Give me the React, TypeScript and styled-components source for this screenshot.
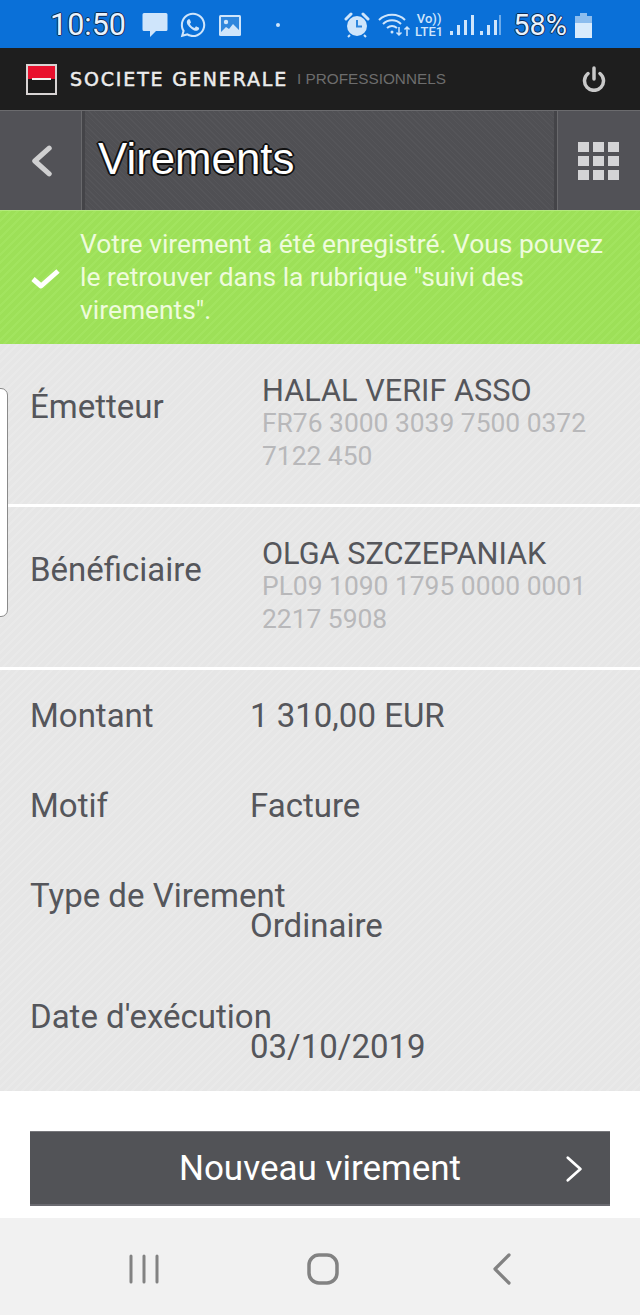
import React from "react";
import styled, { createGlobalStyle } from "styled-components";
import { FaWhatsapp } from "react-icons/fa";

const GlobalStyle = createGlobalStyle`
  html, body {
    margin: 0;
    padding: 0;
    background: #ffffff;
  }
  * {
    box-sizing: border-box;
  }
`;

const Page = styled.div`
  position: relative;
  width: 640px;
  height: 1315px;
  overflow: hidden;
  display: flex;
  flex-direction: column;
  font-family: Roboto, "Liberation Sans", sans-serif;
`;

/* barre de statut */
const StatusBar = styled.div`
  height: 48px;
  flex: none;
  background: #0a70d8;
  display: flex;
  align-items: center;
  justify-content: space-between;
  padding: 2px 48px 0 50px;
  color: #cfe5fb;
`;

const StatusGroup = styled.div`
  display: flex;
  align-items: center;
  gap: ${(p: { $gap?: number }) => p.$gap ?? 10}px;
`;

const OutlinedStatusText = styled.span<{ $size: number; $ml?: number; $mr?: number }>`
  font-size: ${(p) => p.$size}px;
  line-height: 1;
  color: #e8f2fc;
  margin-left: ${(p) => p.$ml ?? 0}px;
  margin-right: ${(p) => p.$mr ?? 0}px;
  text-shadow: -1px 0 #0b2a55, 1px 0 #0b2a55, 0 -1px #0b2a55, 0 1px #0b2a55;
`;

const Dot = styled.span`
  width: 4px;
  height: 4px;
  border-radius: 50%;
  background: #cfe5fb;
  margin: 0 60px 0 23px;
`;

const NetLabel = styled.span`
  display: flex;
  flex-direction: column;
  align-items: center;
  width: 30px;
  font-size: 13px;
  line-height: 13px;
  font-weight: 500;
  color: #cfe5fb;
  margin: 0 1px 0 -3px;
`;

/* bandeau banque */
const BrandBar = styled.div`
  height: 62px;
  flex: none;
  background: #1e1e1e;
  display: flex;
  align-items: center;
  padding: 0 34px 0 26px;
`;

const Logo = styled.div`
  width: 31px;
  height: 31px;
  border: 2px solid #d8d4d4;
  background: linear-gradient(#e9112e 0 50%, #1a1a1a 50% 100%);
  display: flex;
  align-items: center;
  justify-content: center;
  margin-right: 13px;
  &::after {
    content: "";
    width: 19px;
    height: 2px;
    background: #f2f2f2;
  }
`;

const BrandName = styled.span`
  font-family: "DejaVu Sans", sans-serif;
  font-size: 19px;
  font-weight: 400;
  color: #ececec;
  letter-spacing: 1.85px;
  -webkit-text-stroke: 0.5px #ececec;
`;

const BrandSub = styled.span`
  font-family: "Liberation Sans", sans-serif;
  font-size: 15.3px;
  color: #6d6d6d;
  margin-left: 9px;
  flex: 1;
`;

/* barre de titre */
const TitleBar = styled.div`
  height: 100px;
  flex: none;
  display: grid;
  grid-template-columns: 85px 1fr 86px;
  background: #525257;
  border-top: 1px solid #6b6b6e;
`;

const TitleCell = styled.div<{ $divider?: "left" | "right" }>`
  display: flex;
  align-items: center;
  justify-content: center;
  ${(p) =>
    p.$divider === "right"
      ? "border-right: 3px solid #444448; box-shadow: inset -1px 0 #69696c;"
      : ""}
  ${(p) =>
    p.$divider === "left"
      ? "border-left: 3px solid #444448; box-shadow: inset 1px 0 #69696c;"
      : ""}
`;

const TitleMain = styled.div`
  display: flex;
  align-items: center;
  padding: 0 0 3px 13px;
  background: repeating-linear-gradient(
    45deg,
    #555559 0 1px,
    #505054 1px 4px
  );
`;

const Title = styled.h1`
  margin: 0;
  font-family: "Liberation Sans", sans-serif;
  font-size: 43.8px;
  font-weight: 400;
  color: #ffffff;
  text-shadow: -2px 0 #111, 2px 0 #111, 0 -2px #111, 0 2px #111, -1px -1px #111,
    1px 1px #111, -1px 1px #111, 1px -1px #111;
`;

const GridIcon = styled.div`
  display: grid;
  grid-template-columns: repeat(3, 11px);
  grid-auto-rows: 10px;
  gap: 4px;
  span {
    background: #d4d4d6;
  }
`;

/* message de confirmation */
const SuccessBanner = styled.div`
  height: 134px;
  flex: none;
  display: flex;
  align-items: center;
  background: repeating-linear-gradient(
    135deg,
    #a2e45f 0 2px,
    #9de058 2px 6px
  );
  border-top: 1px solid #b4ea7c;
  padding-left: 30px;
`;

const SuccessIcon = styled.div`
  width: 50px;
  flex: none;
  display: flex;
`;

const SuccessText = styled.p`
  margin: 0;
  font-size: 26.4px;
  line-height: 33px;
  color: #eefbdc;
`;

/* détails */
const Panel = styled.section`
  background: repeating-linear-gradient(
    135deg,
    #e9e9e9 0 2px,
    #e6e6e6 2px 6px
  );
`;

const PartyPanel = styled(Panel)`
  height: 160px;
  margin-bottom: 3px;
  display: grid;
  grid-template-columns: 232px 1fr;
  padding: 30px 30px 0 30px;
`;

const Label = styled.div<{ $top?: number }>`
  font-size: 33px;
  line-height: 36px;
  color: #55565b;
  padding-top: ${(p) => p.$top ?? 0}px;
`;

const PartyName = styled.div`
  font-size: 30.7px;
  line-height: 33px;
  color: #55565b;
`;

const Iban = styled.div`
  font-size: 26.4px;
  line-height: 32.5px;
  color: #b8b8ba;
`;

const SummaryPanel = styled(Panel)`
  height: 421px;
  padding: 28px 30px 0 30px;
`;

const SummaryRow = styled.div`
  display: grid;
  grid-template-columns: 220px 1fr;
  height: 90px;
`;

const StackedRow = styled.div<{ $height: number }>`
  height: ${(p) => p.$height}px;
`;

const SummaryValue = styled.div`
  font-size: 33px;
  line-height: 36px;
  color: #55565b;
`;

const StackedValue = styled(SummaryValue)`
  margin-left: 220px;
  margin-top: -6px;
`;

/* bouton */
const Footer = styled.div`
  flex: 1;
  background: #ffffff;
  padding: 40px 30px 0;
`;

const PrimaryButton = styled.button`
  position: relative;
  width: 100%;
  height: 75px;
  display: flex;
  align-items: center;
  justify-content: center;
  background: #525357;
  border: 0;
  border-top: 1px solid #77777b;
  border-bottom: 2px solid #6a6a70;
  color: #ffffff;
  font-family: Roboto, sans-serif;
  font-size: 35px;
  svg {
    position: absolute;
    right: 25px;
    top: 23px;
  }
`;

/* navigation android */
const NavBar = styled.div`
  height: 97px;
  flex: none;
  background: #f1f1f1;
  display: grid;
  grid-template-columns: repeat(3, 179px);
  justify-content: start;
  align-items: center;
  justify-items: center;
  padding: 5px 0 0 54px;
`;

const SideHandle = styled.div`
  position: absolute;
  left: -10px;
  top: 388px;
  width: 18px;
  height: 229px;
  background: #ffffff;
  border: 1px solid #8a8a8a;
  border-radius: 7px;
`;

const Chevron = ({ dir, size, color, width }: { dir: "left" | "right"; size: number; color: string; width: number }) => (
  <svg width={size * 0.7} height={size} viewBox="0 0 14 20" fill="none">
    <path
      d={dir === "left" ? "M12 2 L3 10 L12 18" : "M2 2 L11 10 L2 18"}
      stroke={color}
      strokeWidth={width}
      strokeLinecap="round"
      strokeLinejoin="round"
    />
  </svg>
);

const App: React.FC = () => {
  return (
    <Page>
      <GlobalStyle />
      <StatusBar>
        <StatusGroup $gap={11}>
          <OutlinedStatusText $size={30.5} $mr={5}>10:50</OutlinedStatusText>
          <svg width="26" height="26" viewBox="0 0 26 26">
            <path d="M2 1h22a1.500 1.500 0 0 1 1.500 1.500v15a1.500 1.500 0 0 1-1.500 1.500H14l-6 6v-6H2A1.500 1.500 0 0 1 .5 17.500v-15A1.500 1.500 0 0 1 2 1z" fill="#cfe5fb" />
          </svg>
          <FaWhatsapp size={28} color="#cfe5fb" />
          <svg width="24" height="23" viewBox="0 0 24 23">
            <rect x="1" y="1" width="22" height="21" rx="1.500" fill="#cfe5fb" />
            <rect x="3" y="3" width="18" height="17" fill="#2f86dd" />
            <circle cx="8" cy="8" r="2.200" fill="#cfe5fb" />
            <path d="M3 18l5-5 3 2 4-5 6 6v4H3z" fill="#cfe5fb" />
          </svg>
          <Dot />
        </StatusGroup>
        <StatusGroup $gap={5}>
          <svg width="29" height="26" viewBox="0 0 29 26">
            <circle cx="13" cy="14" r="10" fill="#cfe5fb" />
            <path d="M13 8v6.500h5" stroke="#2f86dd" strokeWidth="2" fill="none" />
            <path d="M2 7l5-5M24 7l-5-5" stroke="#cfe5fb" strokeWidth="3" strokeLinecap="round" />
            <path d="M6 23l-2 2M20 23l2 2" stroke="#cfe5fb" strokeWidth="2" />
          </svg>
          <svg width="34" height="26" viewBox="0 0 34 26" fill="none" stroke="#cfe5fb" strokeWidth="2">
            <path d="M1 8c7-7 19-7 26 0" />
            <path d="M5 12c5-5 13-5 18 0" />
            <path d="M9 16c3-2.500 7-2.500 10 0" />
            <circle cx="14" cy="20" r="1.500" fill="#cfe5fb" stroke="none" />
            <path d="M21 15v8m-2.500-2.500 2.500 2.500 2.500-2.500M29 24v-9m-2.500 2.500 2.500-2.500 2.500 2.500" strokeWidth="1.500" />
          </svg>
          <NetLabel>
            <span>Vo))</span>
            <span>LTE1</span>
          </NetLabel>
          <svg width="52" height="24" viewBox="0 0 52 24" fill="#cfe5fb">
            <rect x="0" y="18" width="3" height="4" />
            <rect x="7" y="12" width="3" height="10" />
            <rect x="14" y="7" width="3" height="15" />
            <rect x="21" y="2" width="3" height="20" />
            <rect x="30" y="18" width="3" height="4" />
            <rect x="37" y="12" width="3" height="10" />
            <rect x="44" y="7" width="3" height="15" />
            <rect x="49" y="2" width="2" height="20" opacity="0.5" />
          </svg>
          <OutlinedStatusText $size={29} $ml={6} $mr={3}>58%</OutlinedStatusText>
          <svg width="17" height="25" viewBox="0 0 17 25">
            <path d="M5 0h7v3h5v22H0V3h5z" fill="#8dbdee" />
            <rect x="0" y="10" width="17" height="15" fill="#d9ebfc" />
          </svg>
        </StatusGroup>
      </StatusBar>

      <BrandBar>
        <Logo />
        <BrandName>SOCIETE GENERALE</BrandName>
        <BrandSub>I PROFESSIONNELS</BrandSub>
        <svg width="24" height="26" viewBox="0 0 24 26" fill="none" stroke="#c9c9c9" strokeWidth="3.500" strokeLinecap="round">
          <path d="M12 2v11" />
          <path d="M6 7.500a9.500 9.500 0 1 0 12 0" />
        </svg>
      </BrandBar>

      <TitleBar>
        <TitleCell $divider="right">
          <Chevron dir="left" size={32} color="#cfcfd0" width={3.2} />
        </TitleCell>
        <TitleMain>
          <Title>Virements</Title>
        </TitleMain>
        <TitleCell $divider="left">
          <GridIcon>
            {Array.from({ length: 9 }).map((_, i) => (
              <span key={i} />
            ))}
          </GridIcon>
        </TitleCell>
      </TitleBar>

      <SuccessBanner>
        <SuccessIcon>
          <svg width="32" height="24" viewBox="0 0 32 24" fill="none">
            <path d="M3 13l8 7L28 5" stroke="#ffffff" strokeWidth="5" strokeLinejoin="round" />
          </svg>
        </SuccessIcon>
        <SuccessText>
          Votre virement a été enregistré. Vous pouvez
          <br />
          le retrouver dans la rubrique "suivi des
          <br />
          virements".
        </SuccessText>
      </SuccessBanner>

      <PartyPanel>
        <Label $top={15}>Émetteur</Label>
        <div>
          <PartyName>HALAL VERIF ASSO</PartyName>
          <Iban>
            FR76 3000 3039 7500 0372
            <br />
            7122 450
          </Iban>
        </div>
      </PartyPanel>

      <PartyPanel>
        <Label $top={15}>Bénéficiaire</Label>
        <div>
          <PartyName>OLGA SZCZEPANIAK</PartyName>
          <Iban>
            PL09 1090 1795 0000 0001
            <br />
            2217 5908
          </Iban>
        </div>
      </PartyPanel>

      <SummaryPanel>
        <SummaryRow>
          <Label>Montant</Label>
          <SummaryValue>1 310,00 EUR</SummaryValue>
        </SummaryRow>
        <SummaryRow>
          <Label>Motif</Label>
          <SummaryValue>Facture</SummaryValue>
        </SummaryRow>
        <StackedRow $height={121}>
          <Label>Type de Virement</Label>
          <StackedValue>Ordinaire</StackedValue>
        </StackedRow>
        <StackedRow $height={90}>
          <Label>Date d'exécution</Label>
          <StackedValue>03/10/2019</StackedValue>
        </StackedRow>
      </SummaryPanel>

      <Footer>
        <PrimaryButton>
          Nouveau virement
          <Chevron dir="right" size={28} color="#ffffff" width={2} />
        </PrimaryButton>
      </Footer>

      <NavBar>
        <svg width="30" height="30" viewBox="0 0 30 30" stroke="#828282" strokeWidth="3" strokeLinecap="round">
          <path d="M2 2v26M15 2v26M28 2v26" />
        </svg>
        <svg width="32" height="32" viewBox="0 0 32 32" fill="none" stroke="#828282" strokeWidth="3.500">
          <rect x="2" y="2" width="28" height="28" rx="10" />
        </svg>
        <svg width="20" height="32" viewBox="0 0 20 32" fill="none" stroke="#828282" strokeWidth="3.200" strokeLinecap="round" strokeLinejoin="round">
          <path d="M17 2L3 16l14 14" />
        </svg>
      </NavBar>

      <SideHandle />
    </Page>
  );
};

export default App;
